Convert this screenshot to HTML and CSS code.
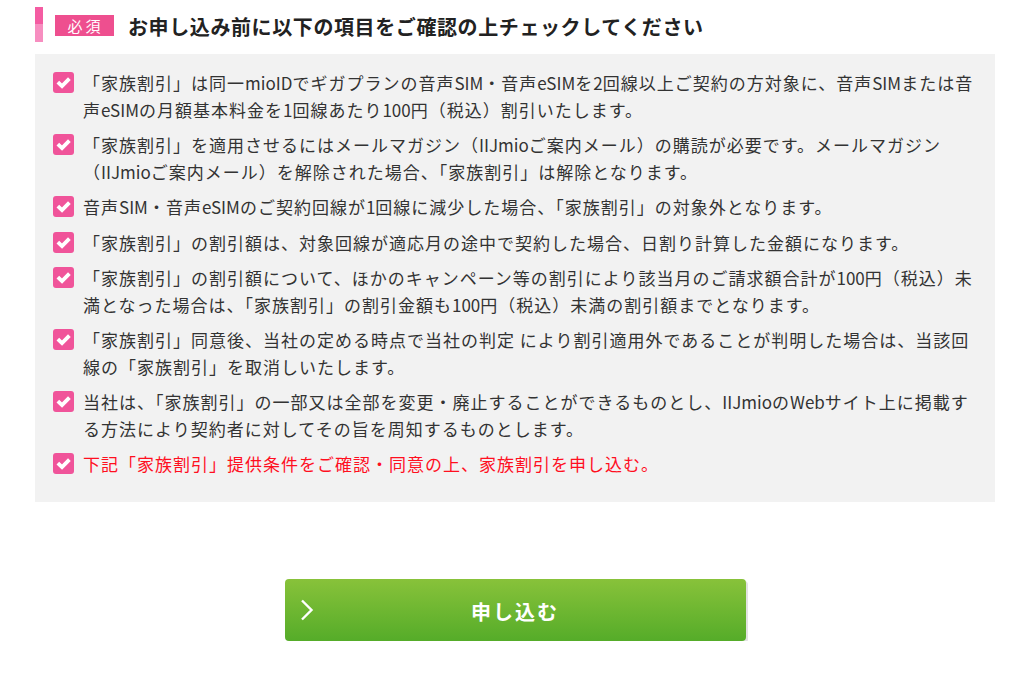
FILE: index.html
```html
<!DOCTYPE html>
<html lang="ja">
<head>
<meta charset="utf-8">
<title>家族割引</title>
<link rel="stylesheet" href="styles.css">
</head>
<body>
<div class="wrap">
  <div class="head">
    <span class="bar"></span>
    <span class="badge">必須</span>
    <h2 class="title">お申し込み前に以下の項目をご確認の上チェックしてください</h2>
  </div>
  <div class="box">
    <div class="item"><span class="cb"><svg viewBox="0 0 20 20"><path d="M4.6 9.6 L8.6 13.5 L15.6 6.3"/></svg></span><p class="txt">「家族割引」は同一<span class="en">mioID</span>でギガプランの音声<span class="en">SIM</span>・音声<span class="en">eSIM</span>を<span class="en">2</span>回線以上ご契約の方対象に、音声<span class="en">SIM</span>または音<br>声<span class="en">eSIM</span>の月額基本料金を<span class="en">1</span>回線あたり<span class="en">100</span>円（税込）割引いたします。</p></div>
    <div class="item"><span class="cb"><svg viewBox="0 0 20 20"><path d="M4.6 9.6 L8.6 13.5 L15.6 6.3"/></svg></span><p class="txt">「家族割引」を適用させるにはメールマガジン（<span class="en">IIJmio</span>ご案内メール）の購読が必要です。メールマガジン<br>（<span class="en">IIJmio</span>ご案内メール）を解除された場合、「家族割引」は解除となります。</p></div>
    <div class="item"><span class="cb"><svg viewBox="0 0 20 20"><path d="M4.6 9.6 L8.6 13.5 L15.6 6.3"/></svg></span><p class="txt">音声<span class="en">SIM</span>・音声<span class="en">eSIM</span>のご契約回線が<span class="en">1</span>回線に減少した場合、「家族割引」の対象外となります。</p></div>
    <div class="item"><span class="cb"><svg viewBox="0 0 20 20"><path d="M4.6 9.6 L8.6 13.5 L15.6 6.3"/></svg></span><p class="txt">「家族割引」の割引額は、対象回線が適応月の途中で契約した場合、日割り計算した金額になります。</p></div>
    <div class="item"><span class="cb"><svg viewBox="0 0 20 20"><path d="M4.6 9.6 L8.6 13.5 L15.6 6.3"/></svg></span><p class="txt">「家族割引」の割引額について、ほかのキャンペーン等の割引により該当月のご請求額合計が<span class="en">100</span>円（税込）未<br>満となった場合は、「家族割引」の割引金額も<span class="en">100</span>円（税込）未満の割引額までとなります。</p></div>
    <div class="item"><span class="cb"><svg viewBox="0 0 20 20"><path d="M4.6 9.6 L8.6 13.5 L15.6 6.3"/></svg></span><p class="txt">「家族割引」同意後、当社の定める時点で当社の判定 により割引適用外であることが判明した場合は、当該回<br>線の「家族割引」を取消しいたします。</p></div>
    <div class="item"><span class="cb"><svg viewBox="0 0 20 20"><path d="M4.6 9.6 L8.6 13.5 L15.6 6.3"/></svg></span><p class="txt">当社は、「家族割引」の一部又は全部を変更・廃止することができるものとし、<span class="en">IIJmio</span>の<span class="en">Web</span>サイト上に掲載す<br>る方法により契約者に対してその旨を周知するものとします。</p></div>
    <div class="item"><span class="cb"><svg viewBox="0 0 20 20"><path d="M4.6 9.6 L8.6 13.5 L15.6 6.3"/></svg></span><p class="txt red">下記「家族割引」提供条件をご確認・同意の上、家族割引を申し込む。</p></div>
  </div>
  <div class="actions">
    <button class="submit" type="button"><svg class="chev" viewBox="0 0 14 22"><path d="M2 1.5 L11.5 11 L2 20.5"/></svg><span>申し込む</span></button>
  </div>
</div>
</body>
</html>
```
FILE: styles.css
```css
* { box-sizing: border-box; }
body {
  margin: 0;
  background: #fff;
  font-family: "Noto Sans CJK JP", "Noto Sans", sans-serif;
  color: #333;
}
.wrap {
  width: 960px;
  margin-left: 35px;
  padding-top: 7px;
}
.head {
  display: flex;
  align-items: center;
  height: 35px;
}
.bar {
  width: 8px;
  height: 35px;
  background: linear-gradient(to bottom, #f45ca2 0, #f45ca2 50%, #f78ec0 50%, #f78ec0 100%);
}
.badge {
  margin-left: 12px;
  margin-top: 2px;
  width: 59px;
  height: 21px;
  background: #ee4f8f;
  color: #fff;
  font-size: 15px;
  letter-spacing: 3px;
  line-height: 21px;
  text-align: center;
  padding-left: 2px;
}
.title {
  margin: 4px 0 0 14px;
  font-size: 20px;
  font-weight: bold;
  color: #222;
  letter-spacing: 0.6px;
  line-height: 1;
}
.box {
  margin-top: 12px;
  background: #f2f2f2;
  padding: 16px 18px 24px 18px;
}
.item {
  display: flex;
  align-items: flex-start;
  margin-bottom: 9px;
}
.item:last-child { margin-bottom: 0; }
.cb {
  flex: none;
  width: 21px;
  height: 21px;
  margin-top: 2px;
  margin-right: 9px;
  background: #f0549a;
  border-radius: 3px;
  display: flex;
}
.cb svg {
  width: 21px;
  height: 21px;
  fill: none;
  stroke: #fff;
  stroke-width: 3.6;
  stroke-linecap: butt;
  stroke-linejoin: miter;
}
.txt {
  margin: 0;
  font-size: 17px;
  letter-spacing: 1px;
  line-height: 26.5px;
  color: #333;
  white-space: nowrap;
}
.en { letter-spacing: 0; }
.txt.red { color: #ff0f1f; }
.actions {
  display: flex;
  justify-content: center;
  margin-top: 77px;
}
.submit {
  position: relative;
  width: 461px;
  height: 62px;
  border: 0;
  border-radius: 4px;
  background: linear-gradient(to bottom, #88c23a, #55ac29);
  box-shadow: 2px 2px 0 #e2e2e2;
  color: #fff;
  font-family: inherit;
  font-size: 20px;
  font-weight: bold;
  letter-spacing: 2px;
  cursor: pointer;
  display: flex;
  align-items: center;
  justify-content: center;
  padding: 4px 0 0 0;
}
.chev {
  position: absolute;
  left: 15px;
  top: 20px;
  width: 14px;
  height: 22px;
  fill: none;
  stroke: #fff;
  stroke-width: 2.4;
}
```
